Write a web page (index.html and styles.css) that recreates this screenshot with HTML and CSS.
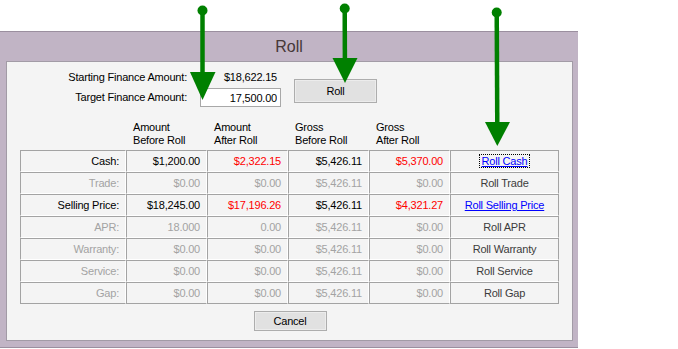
FILE: index.html
```html
<!DOCTYPE html>
<html lang="en">
<head>
    <meta charset="UTF-8">
    <title>Roll</title>
    <link rel="stylesheet" href="styles.css">
</head>
<body>
    <div class="dialog">
        <div class="title">Roll</div>

        <div class="panel">
            <div class="finance">
                <div class="finance-grid">
                    <span class="finance-label">Starting Finance Amount:</span>
                    <span class="finance-value">$18,622.15</span>
                    <span class="finance-label">Target Finance Amount:</span>
                    <input class="amount-input" type="text" value="17,500.00">
                </div>
                <button class="btn roll-btn">Roll</button>
            </div>

            <div class="roll-grid">
                <div class="head"></div>
                <div class="head">Amount<br>Before Roll</div>
                <div class="head">Amount<br>After Roll</div>
                <div class="head">Gross<br>Before Roll</div>
                <div class="head">Gross<br>After Roll</div>
                <div class="head"></div>

                <!-- Cash -->
                <div class="cell label">Cash:</div>
                <div class="cell">$1,200.00</div>
                <div class="cell red">$2,322.15</div>
                <div class="cell">$5,426.11</div>
                <div class="cell red">$5,370.00</div>
                <div class="cell action last-col"><a class="roll-link focused" href="#">Roll Cash</a></div>

                <!-- Trade -->
                <div class="cell label muted">Trade:</div>
                <div class="cell muted">$0.00</div>
                <div class="cell muted">$0.00</div>
                <div class="cell muted">$5,426.11</div>
                <div class="cell muted">$0.00</div>
                <div class="cell action last-col">Roll Trade</div>

                <!-- Selling Price -->
                <div class="cell label">Selling Price:</div>
                <div class="cell">$18,245.00</div>
                <div class="cell red">$17,196.26</div>
                <div class="cell">$5,426.11</div>
                <div class="cell red">$4,321.27</div>
                <div class="cell action last-col"><a class="roll-link" href="#">Roll Selling Price</a></div>

                <!-- APR -->
                <div class="cell label muted">APR:</div>
                <div class="cell muted">18.000</div>
                <div class="cell muted">0.00</div>
                <div class="cell muted">$5,426.11</div>
                <div class="cell muted">$0.00</div>
                <div class="cell action last-col">Roll APR</div>

                <!-- Warranty -->
                <div class="cell label muted">Warranty:</div>
                <div class="cell muted">$0.00</div>
                <div class="cell muted">$0.00</div>
                <div class="cell muted">$5,426.11</div>
                <div class="cell muted">$0.00</div>
                <div class="cell action last-col">Roll Warranty</div>

                <!-- Service -->
                <div class="cell label muted">Service:</div>
                <div class="cell muted">$0.00</div>
                <div class="cell muted">$0.00</div>
                <div class="cell muted">$5,426.11</div>
                <div class="cell muted">$0.00</div>
                <div class="cell action last-col">Roll Service</div>

                <!-- Gap -->
                <div class="cell label muted last-row">Gap:</div>
                <div class="cell muted last-row">$0.00</div>
                <div class="cell muted last-row">$0.00</div>
                <div class="cell muted last-row">$5,426.11</div>
                <div class="cell muted last-row">$0.00</div>
                <div class="cell action last-col last-row">Roll Gap</div>
            </div>

            <div class="actions">
                <button class="btn cancel-btn">Cancel</button>
            </div>
        </div>
    </div>

    <!-- annotation arrows drawn over the dialog -->
    <svg class="arrows" width="678" height="349" viewBox="0 0 678 349">
        <g fill="#008000" stroke="#008000">
            <circle cx="202.5" cy="10.5" r="5" stroke="none"/>
            <line x1="202.5" y1="10" x2="202.5" y2="76" stroke-width="4.5"/>
            <polygon points="190,72 215.5,72 202.5,100" stroke="none"/>

            <circle cx="344.7" cy="8.5" r="5" stroke="none"/>
            <line x1="344.7" y1="8" x2="344.9" y2="62" stroke-width="4.5"/>
            <polygon points="332.5,58 357.5,58 345,83" stroke="none"/>

            <circle cx="496.7" cy="12.5" r="5" stroke="none"/>
            <line x1="496.7" y1="12" x2="497.3" y2="126" stroke-width="4.5"/>
            <polygon points="485,122 510,122 497.3,146" stroke="none"/>
        </g>
    </svg>
</body>
</html>
```

FILE: styles.css
```css
body {
    margin: 0;
    padding: 0;
    background: #ffffff;
    font-family: "Liberation Sans", Arial, sans-serif;
    font-size: 11px;
    letter-spacing: -0.2px;
    color: #000000;
}

.dialog {
    margin-top: 31px;
    width: 578px;
    height: 317px;
    box-sizing: border-box;
    background: #c1b4c5;
    border-top: 1px solid #9b8f9f;
    border-bottom: 1px solid #9b8f9f;
}

.title {
    height: 29px;
    line-height: 29px;
    text-align: center;
    font-size: 16px;
    letter-spacing: 0;
    color: #463838;
}

.panel {
    margin-left: 6px;
    width: 567px;
    height: 280px;
    box-sizing: border-box;
    background: #f4f4f4;
    border: 1px solid #a29ba6;
}

.finance {
    display: flex;
    align-items: flex-start;
    padding-top: 6px;
}

.finance-grid {
    display: grid;
    grid-template-columns: 181px 81px;
    grid-auto-rows: 19px;
    column-gap: 12px;
    row-gap: 1px;
}

.finance-label {
    text-align: right;
    line-height: 19px;
    padding-right: 1px;
}

.finance-value {
    text-align: right;
    line-height: 19px;
    padding-right: 4px;
}

.amount-input {
    width: 81px;
    height: 19px;
    box-sizing: border-box;
    margin: 0;
    padding: 0 3px 0 0;
    border: 1px solid #a8a8a8;
    background: #ffffff;
    font-family: inherit;
    font-size: 11px;
    letter-spacing: -0.2px;
    text-align: right;
    color: #000000;
}

.btn {
    box-sizing: border-box;
    margin: 0;
    padding: 0;
    background: #e1e1e1;
    border: 1px solid #adadad;
    box-shadow: inset 0 0 0 1px #ececec;
    font-family: inherit;
    font-size: 11px;
    letter-spacing: -0.2px;
    color: #000000;
}

.roll-btn {
    width: 83px;
    height: 24px;
    margin-left: 13px;
    margin-top: 11px;
}

.roll-grid {
    display: grid;
    grid-template-columns: 106px 81px 81px 81px 81px 109px;
    margin-left: 13px;
    margin-top: 14px;
    width: 539px;
}

.head {
    height: 29px;
    line-height: 13px;
    padding-left: 7px;
    box-sizing: border-box;
}

.cell {
    height: 22px;
    line-height: 20px;
    box-sizing: border-box;
    padding: 0 6px 0 0;
    text-align: right;
    white-space: nowrap;
    border-top: 1px solid #a3a3a3;
    border-left: 1px solid #a3a3a3;
    border-right: 1px solid #ffffff;
    border-bottom: 1px solid #ffffff;
}

.cell.last-col {
    border-right-color: #a3a3a3;
}

.cell.last-row {
    border-bottom-color: #a3a3a3;
}

.cell.muted {
    color: #a3a3a3;
}

.cell.red {
    color: #ff0000;
}

.cell.action {
    text-align: center;
    padding: 0;
    color: #3c3c3c;
}

.roll-link {
    color: #0000ff;
    text-decoration: underline;
}

.roll-link.focused {
    outline: 1px dotted #000000;
    outline-offset: 0;
    padding: 0 2px;
}

.actions {
    display: flex;
    justify-content: center;
    padding-top: 7px;
}

.cancel-btn {
    width: 73px;
    height: 20px;
    margin-left: 1px;
}

.arrows {
    position: absolute;
    top: 0;
    left: 0;
    pointer-events: none;
}
```
